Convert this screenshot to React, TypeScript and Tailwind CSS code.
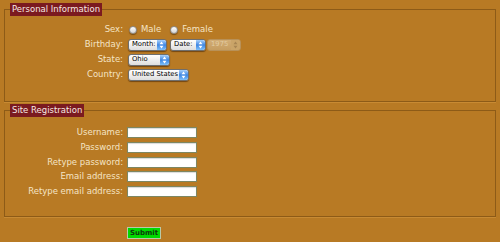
import clsx from 'clsx';

const font = { fontFamily: '"DejaVu Sans", Verdana, sans-serif' };

function Arrows({ color }: { color: string }) {
  return (
    <svg width="5" height="8" viewBox="0 0 5 8" fill={color}>
      <path d="M2.5 0.6 L4.5 3.2 L0.5 3.2 Z" />
      <path d="M2.5 7.4 L4.5 4.8 L0.5 4.8 Z" />
    </svg>
  );
}

function Picker({ value, w, disabled }: { value: string; w: string; disabled?: boolean }) {
  return (
    <button
      type="button"
      disabled={disabled}
      className={clsx(
        'relative flex h-[12px] items-center overflow-hidden whitespace-nowrap rounded-[3px] border pl-[3px] text-[6.8px] leading-none',
        w,
        disabled
          ? 'border-[#b89158] bg-linear-to-b from-[#d2ad76] to-[#c69d60] text-[#e2cca2]'
          : 'border-[#6e6e6e] bg-linear-to-b from-white to-[#dedede] text-black shadow-[0_1px_1px_rgba(60,30,0,0.55)]'
      )}
      style={font}
    >
      <span>{value}</span>
      <span
        className={clsx(
          'pointer-events-none absolute bottom-0 right-0 top-0 flex w-[9px] items-center justify-center rounded-r-[2px]',
          disabled
            ? 'bg-[#caa468]'
            : 'bg-linear-to-b from-[#a9d1fa] via-[#3d86e3] to-[#7fc0fa]'
        )}
      >
        <Arrows color={disabled ? '#a88552' : '#ffffff'} />
      </span>
    </button>
  );
}

function Radio({ label }: { label: string }) {
  return (
    <label className="flex items-center gap-[4px]">
      <span className="h-[8px] w-[8px] rounded-full border border-[#8a8a8a] bg-linear-to-b from-white to-[#d6d6d6] shadow-[0_1px_1px_rgba(60,30,0,0.5)]" />
      <span>{label}</span>
    </label>
  );
}

function TextBox() {
  return (
    <input
      type="text"
      className="h-[11px] w-[70px] border border-[#7d8762] bg-white shadow-[inset_0_1px_1px_rgba(0,0,0,0.15)]"
    />
  );
}

function Section({ title, children, className }: { title: string; children: React.ReactNode; className?: string }) {
  return (
    <fieldset className={clsx('border border-[#8d5b17] shadow-[0_1px_0_rgba(230,170,80,0.35)]', className)}>
      <legend className="ml-[5px] h-[13px] bg-[#7b1a1f] px-[2px] text-[8.5px] leading-[13px] text-[#f6e9e4]">
        {title}
      </legend>
      {children}
    </fieldset>
  );
}

export default function App() {
  return (
    <div className="min-h-[242px] bg-[#b87a24] px-[4px] pt-[3px] text-[8.5px] text-[#f5e4c4]" style={font}>
      <Section title="Personal Information" className="pb-[19px] pt-[6px]">
        <div className="grid grid-cols-[118px_1fr] auto-rows-[15.1px] items-center gap-x-[5px]">
          <span className="text-right">Sex:</span>
          <div className="flex items-center gap-[9px] pl-[1px]">
            <Radio label="Male" />
            <Radio label="Female" />
          </div>

          <span className="text-right">Birthday:</span>
          <div className="flex items-center">
            <Picker value="Month:" w="w-[39px]" />
            <div className="w-[3px]" />
            <Picker value="Date:" w="w-[36px]" />
            <div className="w-[1px]" />
            <Picker value="1975" w="w-[34px]" disabled />
          </div>

          <span className="text-right">State:</span>
          <div className="flex items-center">
            <Picker value="Ohio" w="w-[42px]" />
          </div>

          <span className="text-right">Country:</span>
          <div className="flex items-center">
            <Picker value="United States" w="w-[61px]" />
          </div>
        </div>
      </Section>

      <Section title="Site Registration" className="mt-[2px] pb-[17px] pt-[8px]">
        <div className="grid grid-cols-[118px_1fr] auto-rows-[14.7px] items-center gap-x-[4px]">
          <span className="text-right">Username:</span>
          <TextBox />
          <span className="text-right">Password:</span>
          <TextBox />
          <span className="text-right">Retype password:</span>
          <TextBox />
          <span className="text-right">Email address:</span>
          <TextBox />
          <span className="text-right">Retype email address:</span>
          <TextBox />
        </div>
      </Section>

      <div className="pl-[123px] pt-[9px]">
        <button className="h-[12px] w-[34px] border border-[#b9c9a8] bg-[#00d900] text-[7px] font-semibold leading-none text-[#0d3a0d]">
          Submit
        </button>
      </div>
    </div>
  );
}
